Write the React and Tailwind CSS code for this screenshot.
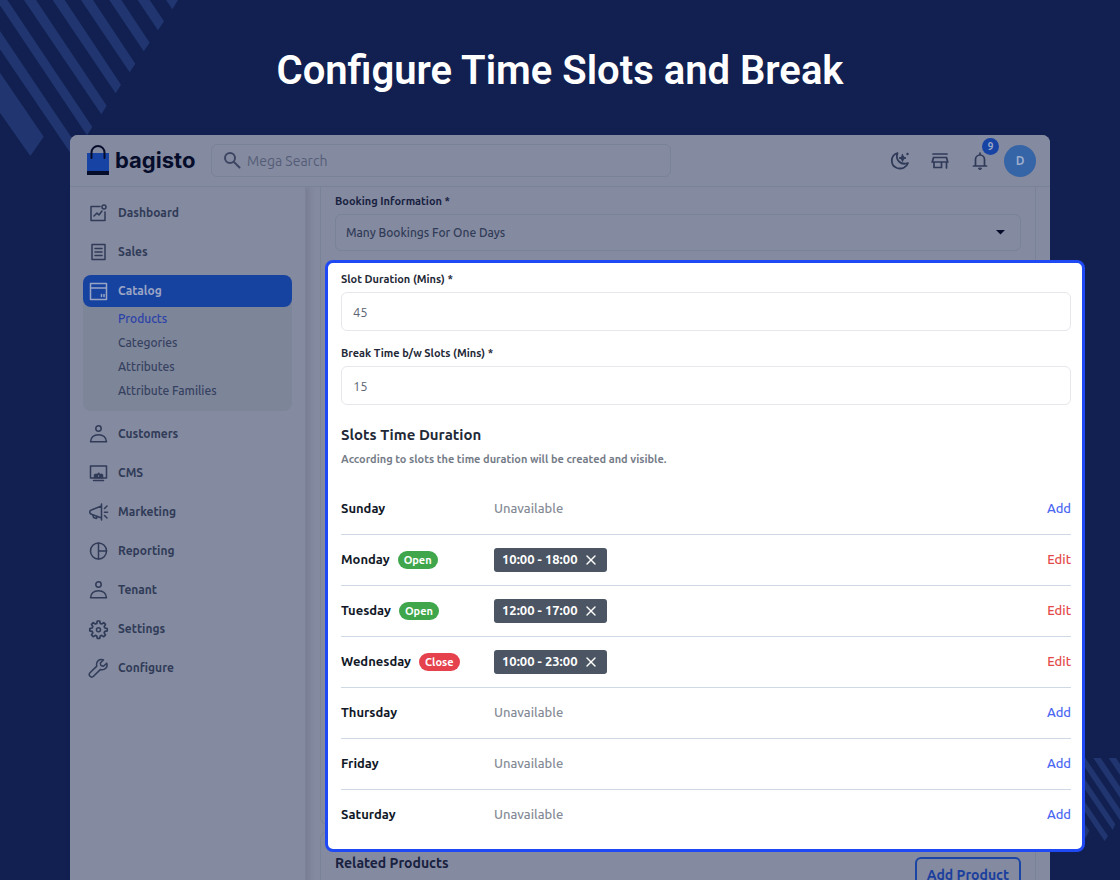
import React, { useState } from "react";
import { X } from "lucide-react";

const ink = {
  fill: "none",
  stroke: "currentColor",
  strokeWidth: 1.5,
  strokeLinejoin: "round",
  strokeLinecap: "round",
};

const icons = {
  dashboard: (
    <>
      <path d="M12 3.500H3v14h14v-8.500" />
      <path d="M6 13l3-3 2 2 3-4" />
      <circle cx="16" cy="4" r="2" />
    </>
  ),
  sales: (
    <>
      <path d="M4 2.500h13v15H4z" />
      <path d="M7 6.500h7M7 10h7M7 13.500h7" />
    </>
  ),
  catalog: (
    <>
      <path d="M2.500 2.500h16v16h-16zM2.500 7h16" />
      <path d="M13.500 13.500v2M16 13.500v2" />
    </>
  ),
  person: (
    <>
      <circle cx="10.500" cy="4.500" r="2.700" />
      <path d="M2.500 17.800c.5-4.500 3.800-7 8-7s7.500 2.500 8 7z" />
    </>
  ),
  cms: (
    <>
      <path d="M2.500 3h16v12h-16zM5.500 17.500h10" />
      <path d="M6.500 14.500V12l1.800-.8 1 1 1.400-2 1.400 2 1-1 1.400.8v2.500z" fill="currentColor" />
      <circle cx="10.600" cy="13" r=".7" className="fill-[#848a9f]" stroke="none" />
    </>
  ),
  marketing: (
    <>
      <path d="M13.500 2v16M13.500 4L4 7.700c-3 .6-3 4.200 0 4.800l9.500 3.500" />
      <path d="M5 13l.5 2.500 3 1 .8-2M16.500 6.500L19 4M16.500 10.200h3M16.500 13.500L19 16" />
    </>
  ),
  reporting: (
    <>
      <circle cx="10.500" cy="10" r="8" />
      <path d="M10.500 2v16M10.500 10h8" />
    </>
  ),
  settings: (
    <>
      <path
        d="M9.300 2h2.400l.5 2.400 1.500.6 2.100-1.300 1.700 1.700-1.300 2.100.6 1.500 2.400.5v2.400l-2.400.5-.6 1.500 1.300 2.100-1.700 1.700-2.100-1.300-1.500.6-.5 2.400H9.300l-.5-2.400-1.500-.6-2.100 1.300L3.500 16l1.300-2.100-.6-1.500-2.400-.5V9.500l2.400-.5.6-1.500-1.300-2.100 1.700-1.700L7.300 5l1.500-.6z"
        strokeWidth="1.700"
      />
      <circle cx="10.500" cy="10.700" r="2" />
    </>
  ),
  configure: (
    <path d="M18.700 5.200l-3.200 3-2.600-.6-.6-2.500 3.100-3.200C11.500.3 7.600 3.500 8.800 8.100L2 14.800c-2.200 2.400 1.200 5.700 3.500 3.500l6.800-6.700c4.600 1.200 7.900-2.500 6.400-6.400z" />
  ),
};

const Icon = ({ name }) => (
  <svg viewBox="0 0 21 21" className="w-[21px] h-[21px] shrink-0" {...ink}>
    {icons[name]}
  </svg>
);

const topMenu = [
  { label: "Dashboard", icon: "dashboard" },
  { label: "Sales", icon: "sales" },
];

const subMenu = ["Products", "Categories", "Attributes", "Attribute Families"];

const bottomMenu = [
  { label: "Customers", icon: "person" },
  { label: "CMS", icon: "cms" },
  { label: "Marketing", icon: "marketing" },
  { label: "Reporting", icon: "reporting" },
  { label: "Tenant", icon: "person" },
  { label: "Settings", icon: "settings" },
  { label: "Configure", icon: "configure" },
];

const initialDays = [
  { day: "Sunday" },
  { day: "Monday", status: "Open", slot: "10:00 - 18:00" },
  { day: "Tuesday", status: "Open", slot: "12:00 - 17:00" },
  { day: "Wednesday", status: "Close", slot: "10:00 - 23:00" },
  { day: "Thursday" },
  { day: "Friday" },
  { day: "Saturday" },
];

const MenuLink = ({ label, icon }) => (
  <a
    href="#"
    className="flex items-center gap-[9px] h-8 px-[5px] text-xs font-bold text-[#303b58]"
  >
    <Icon name={icon} />
    {label}
  </a>
);

const Header = () => (
  <header className="relative flex items-center h-[52px] px-[14px] border-b border-[#788398] bg-[#848a9f] rounded-t-lg">
    <a href="#" className="flex items-center gap-[3px] w-[127px] text-[#060d2b]">
      <svg viewBox="0 0 28 32" className="w-7 h-8 shrink-0">
        <path d="M3 8h22v18H3z" fill="#1743a4" />
        <path d="M3 26h22v4H3z" fill="#060d2b" />
        <path d="M7.500 13V7.500a6.500 6.500 0 0 1 13 0V13" fill="none" stroke="#060d2b" strokeWidth="2" strokeLinecap="round" />
      </svg>
      <span className="font-[Inter] text-[22px] font-bold">bagisto</span>
    </a>
    <label className="flex items-center gap-[5px] h-[33px] w-[460px] px-2.5 border border-[#788398] rounded-md">
      <svg viewBox="0 0 20 20" className="w-5 h-5 shrink-0 text-[#3c4562]" {...ink} strokeWidth="2">
        <circle cx="8" cy="7" r="5" />
        <path d="M12 11l5.500 5.500" />
      </svg>
      <input
        type="text"
        aria-label="Mega Search"
        placeholder="Mega Search"
        className="w-full bg-transparent text-sm outline-none placeholder:text-[#545d78]"
      />
    </label>
    <div className="flex items-center gap-5 ml-auto text-[#2f3a58]">
      <button aria-label="Dark mode">
        <svg viewBox="0 0 20 20" className="w-5 h-5" {...ink} strokeWidth="1.800">
          <path d="M7.500 2C0 4.500 0 14.500 7 17c5 1.500 9.500-.5 11-5C11 14.500 5 9.500 7.500 2z" />
          <path d="M12.500 3.500l1 2.500L16 7l-2.500 1-1 2.500-1-2.500L9 7l2.500-1z" fill="currentColor" strokeWidth="1" />
          <circle cx="17.500" cy="3" r="1.200" fill="currentColor" stroke="none" />
        </svg>
      </button>
      <button aria-label="Visit shop">
        <svg viewBox="0 0 20 20" className="w-5 h-5" {...ink} strokeWidth="1.700" strokeLinejoin="miter">
          <path d="M3 3h14M3.500 6.500h13l1.200 4.500H2.300zM4 11v5.500h7.500V11M16.500 11v6" />
        </svg>
      </button>
      <button aria-label="Notifications" className="relative">
        <svg viewBox="0 0 20 20" className="w-5 h-5" {...ink} strokeWidth="1.700" strokeLinejoin="miter">
          <path d="M3.500 15h13M5.500 15V8.500a4.500 4.500 0 0 1 9 0V15M10 3.500V2" />
          <path d="M8.500 17.500a1.500 1 0 0 0 3 0z" fill="currentColor" strokeWidth="1" />
        </svg>
        <span className="absolute left-3 -top-[13px] flex items-center justify-center w-[17px] h-[17px] rounded-full bg-[#1743a4] text-[#9ca7c6] text-[10px] font-semibold">
          9
        </span>
      </button>
      <button className="-ml-1.5 w-8 h-8 rounded-full bg-[#3564a7] text-[#9aaccb] text-xs font-semibold">
        D
      </button>
    </div>
  </header>
);

const Sidebar = () => (
  <aside className="w-[236px] shrink-0 pt-[10px] px-[13px] border-r border-[#7d8297] shadow-[3px_0_6px_rgba(40,45,80,0.150)]">
    <nav className="flex flex-col gap-[7px]">
      {topMenu.map((item) => (
        <MenuLink key={item.label} {...item} />
      ))}
      <div className="rounded-lg bg-[#7d8599]">
        <a
          href="#"
          className="flex items-center gap-[9px] h-8 px-[5px] rounded-lg bg-[#1743a0] text-xs font-bold text-[#9aa5c4]"
        >
          <Icon name="catalog" />
          Catalog
        </a>
        <div className="flex flex-col pl-[35px] pb-2">
          {subMenu.map((label, i) => (
            <a
              key={label}
              href="#"
              className={`text-xs leading-6 font-medium ${i === 0 ? "text-[#2a41a8]" : "text-[#364160]"}`}
            >
              {label}
            </a>
          ))}
        </div>
      </div>
      {bottomMenu.map((item) => (
        <MenuLink key={item.label} {...item} />
      ))}
    </nav>
  </aside>
);

const Field = ({ id, label, value, onChange }) => (
  <div className="flex flex-col">
    <label htmlFor={id} className="text-[11px] leading-[22px] font-semibold text-[#1f2937]">
      {label} *
    </label>
    <input
      id={id}
      type="text"
      value={value}
      onChange={(e) => onChange(e.target.value)}
      className="h-[39px] mt-0.5 px-[11px] text-[13px] text-[#5b6472] border border-[#e5e7eb] rounded-md outline-none"
    />
  </div>
);

const SlotsPanel = () => {
  const [duration, setDuration] = useState("45");
  const [breakTime, setBreakTime] = useState("15");
  const [days, setDays] = useState(initialDays);

  const handleRemove = (day) => {
    setDays(days.map((d) => (d.day === day ? { day } : d)));
  };

  return (
    <div className="relative z-10 mt-[9px] -mb-[29px] -ml-[10px] -mr-16 pl-[13px] pr-[11px] pt-[5px] pb-2 bg-white border-3 border-[#1f49f4] rounded-lg">
      <div className="flex flex-col gap-[11px]">
        <Field id="slot-duration" label="Slot Duration (Mins)" value={duration} onChange={setDuration} />
        <Field id="break-time" label="Break Time b/w Slots (Mins)" value={breakTime} onChange={setBreakTime} />
      </div>
      <h2 className="mt-[18px] text-[15px] leading-6 font-semibold text-[#1f2937]">
        Slots Time Duration
      </h2>
      <p className="text-[11px] leading-6 font-semibold text-[#757c88]">
        According to slots the time duration will be created and visible.
      </p>
      <ul className="mt-[13px]">
        {days.map(({ day, status, slot }) => (
          <li
            key={day}
            className="flex items-center h-[51px] border-b border-[#cfd9e6] last:border-transparent"
          >
            <div className="flex items-center gap-2 w-[153px] shrink-0 text-[13px] font-semibold text-[#111827]">
              {day}
              {status && (
                <span
                  className={`px-1.5 rounded-full text-[11px] leading-[18px] font-semibold text-white ${
                    status === "Open" ? "bg-[#3fa64b]" : "bg-[#e5424d]"
                  }`}
                >
                  {status}
                </span>
              )}
            </div>
            {slot ? (
              <span className="flex items-center gap-1.5 h-6 px-2 rounded-[3px] bg-[#4b5563] text-[13px] font-bold text-white">
                {slot}
                <button aria-label={`Remove ${day} slot`} onClick={() => handleRemove(day)}>
                  <X className="w-4 h-4" strokeWidth={2} />
                </button>
              </span>
            ) : (
              <span className="text-[13px] font-medium text-[#858b96]">Unavailable</span>
            )}
            <button className={`ml-auto text-[13px] font-medium ${slot ? "text-[#e34a4a]" : "text-[#4c67f1]"}`}>
              {slot ? "Edit" : "Add"}
            </button>
          </li>
        ))}
      </ul>
    </div>
  );
};

const Stripes = () => (
  <>
    <svg viewBox="0 0 540 470" className="absolute left-0 top-0 w-[180px]" fill="#213670">
      <path d="M0 218L131 410 91 468 0 338z" />
      <path d="M0 93L235 443 218 469 0 148z" />
      <path d="M22 0L277 381 261 406 0 16V0z" />
      <path d="M72 0h36L320 317 304 343z" />
      <path d="M158 0h36L363 254 347 280z" />
      <path d="M243 0h36L406 191 389 217z" />
      <path d="M328 0h36L449 128 431 154z" />
      <path d="M413 0h36L492 64 474 91z" />
      <path d="M498 0h36L517 28z" />
    </svg>
    <svg viewBox="0 0 180 280" className="absolute right-0 top-[758px] w-[60px]" fill="#213670">
      <path d="M0 88L88 218 77 239 0 124z" />
      <path d="M0 22L144 234 134 249 0 50z" />
      <path d="M56 36L166 199 158 216 56 66z" />
      <path d="M56 0h20L180 154V187z" />
      <path d="M100 0h22L180 86V119z" />
      <path d="M146 0h22L180 18V51z" />
    </svg>
  </>
);

const App = () => {
  const [booking, setBooking] = useState("Many Bookings For One Days");

  return (
    <div className="relative flex flex-col h-screen overflow-hidden bg-[#112050] font-['Ubuntu','Noto_Sans',sans-serif]">
      <Stripes />
      <h1 className="relative pt-[47px] pb-10 text-center font-[Roboto] text-[40px] leading-[48px] font-semibold text-white">
        Configure Time Slots and Break
      </h1>
      <div className="relative flex flex-col flex-1 mx-[70px] bg-[#848a9f] rounded-t-lg">
        <Header />
        <div className="flex flex-1">
          <Sidebar />
          <main className="flex flex-col flex-1 gap-2 px-[14px]">
            <section className="px-[14px] pt-1 border border-t-0 border-[#798398] rounded-b-md">
              <label htmlFor="booking" className="block text-[11px] leading-5 font-semibold text-[#18213f]">
                Booking Information *
              </label>
              <div className="relative mt-[3px]">
                <select
                  id="booking"
                  value={booking}
                  onChange={(e) => setBooking(e.target.value)}
                  className="block w-full h-[37px] px-[10px] appearance-none bg-transparent text-xs font-medium text-[#303b57] border border-[#788398] rounded-md outline-none"
                >
                  <option>Many Bookings For One Days</option>
                </select>
                <svg viewBox="0 0 10 5" className="absolute right-4 top-4 w-[9px] pointer-events-none">
                  <path d="M0 0h10L5 5z" fill="#060d2b" />
                </svg>
              </div>
              <SlotsPanel />
            </section>
            <section className="flex items-start justify-between flex-1 px-[14px] pt-6 border border-b-0 border-[#798398] rounded-t-md">
              <h2 className="text-sm leading-3 font-semibold text-[#18213f]">Related Products</h2>
              <button className="h-9 px-[10px] text-sm font-semibold text-[#1b3f9e] border-2 border-[#1b45a4] rounded-md">
                Add Product
              </button>
            </section>
          </main>
        </div>
      </div>
    </div>
  );
};

export default App;
